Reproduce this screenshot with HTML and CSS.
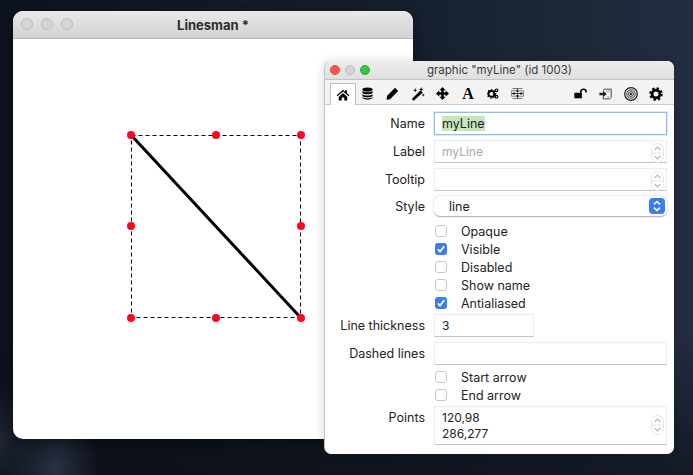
FILE: index.html
```html
<!DOCTYPE html>
<html lang="en">
<head>
<meta charset="utf-8">
<title>Linesman</title>
<link rel="stylesheet" href="styles.css">
</head>
<body>
<svg width="0" height="0" class="defs">
  <symbol id="stepper" viewBox="0 0 13 20">
    <rect x="0.5" y="0.5" width="12" height="19" rx="6" fill="#fff" stroke="#e6e6e6"/>
    <path d="M0.5 10H12.5" stroke="#e6e6e6"/>
    <path d="M3.5 7L6.5 4L9.5 7" fill="none" stroke="#bbb" stroke-width="1.2"/>
    <path d="M3.5 13L6.5 16L9.5 13" fill="none" stroke="#bbb" stroke-width="1.2"/>
  </symbol>
  <symbol id="check" viewBox="0 0 12 12">
    <path d="M2.8 6.3L5 8.6L9.3 3.2" fill="none" stroke="#fff" stroke-width="1.8"/>
  </symbol>
</svg>

<section class="window main-window">
  <header class="main-title">
    <span class="lights">
      <i class="light light-off"></i><i class="light light-off"></i><i class="light light-off"></i>
    </span>
    <span class="main-title-text">Linesman *</span>
  </header>
  <svg class="canvas" width="400" height="400" viewBox="13 39 400 400">
    <rect x="131.5" y="135.5" width="169" height="182" fill="none" stroke="#000" stroke-dasharray="4 3"/>
    <path d="M131 135L301 318" stroke="#000" stroke-width="3"/>
    <g fill="#ff0520">
      <circle cx="131" cy="135" r="4"/><circle cx="216" cy="135" r="4"/><circle cx="301" cy="135" r="4"/>
      <circle cx="131" cy="226" r="4"/><circle cx="301" cy="226" r="4"/>
      <circle cx="131" cy="318" r="4"/><circle cx="216" cy="318" r="4"/><circle cx="301" cy="318" r="4"/>
    </g>
  </svg>
</section>

<section class="window palette">
  <header class="pal-title">
    <span class="lights lights-small">
      <i class="light light-red"></i><i class="light light-off"></i><i class="light light-green"></i>
    </span>
    <span class="pal-title-text">graphic "myLine" (id 1003)</span>
  </header>

  <nav class="tabs">
    <span class="tab tab-active"><svg width="14" height="12" viewBox="0 0 16 14"><path d="M8 1L0.6 7.4L1.5 8.4L8 2.9L14.5 8.4L15.4 7.4L12.5 4.9V1.5H10.5V3.2Z"/><path d="M3 9.2L8 4.8L13 9.2V13.5H9.5V10H6.5V13.5H3Z"/></svg></span>
    <span class="tab"><svg width="11" height="13" viewBox="0 0 13 15"><ellipse cx="6.5" cy="2.8" rx="6" ry="2.5"/><path d="M0.5 4.6C2 6.6 11 6.6 12.5 4.6V7C11 9 2 9 0.5 7Z"/><path d="M0.5 8.4C2 10.4 11 10.4 12.5 8.4V10.4C11 12.4 2 12.4 0.5 10.4Z"/><path d="M0.5 11.6C2 13.6 11 13.6 12.5 11.6V12.4C11 15.2 2 15.2 0.5 12.4Z"/></svg></span>
    <span class="tab"><svg width="13" height="13" viewBox="0 0 13 13"><path d="M9 0.8L12.2 4L4 12.2L0.5 12.7L1 9Z"/></svg></span>
    <span class="tab"><svg width="14" height="14" viewBox="0 0 15 15"><path d="M10.3 3.6L12.6 5.8L3 14.8L0.8 12.8Z"/><path d="M11 0L11.6 1.9L13.5 2.5L11.6 3.1L11 5L10.4 3.1L8.5 2.5L10.4 1.9ZM4.5 1L5.1 2.9L7 3.5L5.1 4.1L4.5 6L3.9 4.1L2 3.5L3.9 2.9ZM13 7L13.5 8L14.8 8.5L13.5 9L13 10.5L12.5 9L11.2 8.5L12.5 8Z"/></svg></span>
    <span class="tab"><svg width="13" height="13" viewBox="0 0 15 15"><path d="M7.5 0L11 3.8H9V6H11.2V4L15 7.5L11.2 11V9H9V11.2H11L7.5 15L4 11.2H6V9H3.8V11L0 7.5L3.8 4V6H6V3.8H4Z"/></svg></span>
    <span class="tab tab-letter">A</span>
    <span class="tab"><svg width="12" height="11" viewBox="0 0 15 14"><circle cx="5.5" cy="7.5" r="3.7" fill="none" stroke="#000" stroke-width="2.4"/><circle cx="5.5" cy="7.5" r="5.4" fill="none" stroke="#000" stroke-width="1.4" stroke-dasharray="2 2"/><circle cx="12" cy="3" r="1.7" fill="none" stroke="#000" stroke-width="1.5"/><circle cx="12" cy="11" r="1.7" fill="none" stroke="#000" stroke-width="1.5"/></svg></span>
    <span class="tab"><svg width="13" height="11" viewBox="0 0 17 14"><path d="M2 0.5H15M2 13.5H15M0.5 3.5H16.5M0.5 10.5H16.5M0.5 3.5V10.5M16.5 3.5V10.5" fill="none" stroke="#555"/><path d="M8.5 0.5V4M8.5 10V13.5M1.5 7H15.5" stroke="#222" stroke-width="1.2"/><path d="M1.5 7L4.5 5V9ZM15.5 7L12.5 5V9ZM8.5 6L6.5 3.5H10.5ZM8.5 8L6.5 10.5H10.5Z"/></svg></span>
    <span class="tab tab-push"><svg width="13" height="11" viewBox="0 0 19 14"><rect x="0.5" y="6" width="11" height="8" rx="0.8"/><path d="M10 6V4C10 -0.2 17.5 -0.2 17.5 4V5.5" fill="none" stroke="#000" stroke-width="2.4"/></svg></span>
    <span class="tab"><svg width="13" height="12" viewBox="0 0 16 14"><path d="M5 3.5L7 1H15V11L13 13H5V10.5" fill="none" stroke="#444" stroke-width="1.2"/><path d="M0.5 5.5H5V3L9.5 7L5 11V8.5H0.5Z" fill="#222"/><path d="M9 3.5H13M10 10.5H12.5" stroke="#777"/></svg></span>
    <span class="tab"><svg width="14" height="14" viewBox="0 0 16 16" fill="none" stroke="#222"><circle cx="8" cy="8" r="7.2" stroke-width="1.4"/><circle cx="8" cy="8" r="4.8"/><circle cx="8" cy="8" r="2.8"/><circle cx="8" cy="8" r="1" fill="#000"/></svg></span>
    <span class="tab"><svg width="14" height="14" viewBox="0 0 15 15"><circle cx="7.5" cy="7.5" r="4.2" fill="none" stroke="#000" stroke-width="3"/><circle cx="7.5" cy="7.5" r="6" fill="none" stroke="#000" stroke-width="2.6" stroke-dasharray="2.4 2.3"/></svg></span>
  </nav>

  <div class="form">
    <label class="lbl lbl-h23">Name</label>
    <div class="field field-focus"><span class="selected">myLine</span></div>

    <label class="lbl lbl-h23">Label</label>
    <div class="field field-muted">myLine<svg class="stepper"><use href="#stepper"/></svg></div>

    <label class="lbl lbl-h23">Tooltip</label>
    <div class="field"><svg class="stepper"><use href="#stepper"/></svg></div>

    <label class="lbl">Style</label>
    <div class="select">line
      <span class="select-btn"><svg width="16" height="16" viewBox="0 0 16 16" fill="none" stroke="#fff" stroke-width="1.6"><path d="M5 6.4L8 3.5L11 6.4M5 9.6L8 12.5L11 9.6"/></svg></span>
    </div>

    <div class="checks">
      <div class="check-row"><span class="box"></span>Opaque</div>
      <div class="check-row"><span class="box box-on"><svg width="12" height="12"><use href="#check"/></svg></span>Visible</div>
      <div class="check-row"><span class="box"></span>Disabled</div>
      <div class="check-row"><span class="box"></span>Show name</div>
      <div class="check-row"><span class="box box-on"><svg width="12" height="12"><use href="#check"/></svg></span>Antialiased</div>
    </div>

    <label class="lbl lbl-h23">Line thickness</label>
    <div class="field field-short">3</div>

    <label class="lbl lbl-h23">Dashed lines</label>
    <div class="field"></div>

    <div class="checks checks-tight">
      <div class="check-row"><span class="box"></span>Start arrow</div>
      <div class="check-row"><span class="box"></span>End arrow</div>
    </div>

    <label class="lbl lbl-top">Points</label>
    <div class="field field-points">120,98<br>286,277<svg class="stepper"><use href="#stepper"/></svg></div>
  </div>
</section>
</body>
</html>
```

FILE: styles.css
```css
html, body {
  margin: 0;
  width: 693px;
  height: 475px;
  overflow: hidden;
}
body {
  position: relative;
  font-family: Inter, "Liberation Sans", sans-serif;
  font-size: 12.5px;
  color: #222;
  background:
    radial-gradient(ellipse 45px 70px at 55px 470px, rgba(44,54,72,.9) 0%, rgba(44,54,72,0) 100%),
    radial-gradient(ellipse 40px 60px at 0px 440px, rgba(34,44,60,.8) 0%, rgba(34,44,60,0) 100%),
    linear-gradient(rgba(8,10,15,0) 70%, rgba(8,10,15,.55) 100%),
    linear-gradient(90deg, #0e1320 0%, #17202e 60%, #232d40 100%);
}
.defs { position: absolute; }
.window {
  position: absolute;
  display: flex;
  flex-direction: column;
  background: #fff;
  overflow: hidden;
}
.main-window {
  left: 13px;
  top: 11px;
  width: 400px;
  height: 428px;
  border-radius: 10px;
  box-shadow: 0 4px 16px rgba(0,0,0,.45);
}
.main-title {
  position: relative;
  flex: none;
  height: 27px;
  border-bottom: 1px solid #b6b6b6;
  background: linear-gradient(#e9e9e9, #d2d2d2);
  display: flex;
  align-items: center;
  justify-content: center;
}
.main-title-text {
  font-weight: 700;
  font-size: 13px;
  color: #2b2b2b;
}
.lights {
  position: absolute;
  left: 8px;
  top: 7px;
  display: flex;
  gap: 8px;
}
.light {
  display: block;
  width: 12px;
  height: 12px;
  border-radius: 50%;
  box-sizing: border-box;
}
.light-off { background: #d5d5d5; border: 1px solid #bcbcbc; }
.light-red { background: #fc5753; border: 1px solid #df4744; }
.light-green { background: #33c748; border: 1px solid #27aa35; }
.lights-small { left: 5px; top: 4px; gap: 5px; }
.lights-small .light { width: 10px; height: 10px; }
.canvas { display: block; }

.palette {
  left: 325px;
  top: 61px;
  width: 349px;
  height: 393px;
  border-radius: 7px;
  box-shadow: -1px 0 0 #c6c6c6, -2px 0 10px rgba(0,0,0,.14);
}
.pal-title {
  position: relative;
  flex: none;
  height: 18px;
  border-bottom: 1px solid #c4c4c4;
  background: linear-gradient(#ededed, #dfdfdf);
  text-align: center;
  font-size: 11.5px;
  line-height: 18px;
  color: #3a3a3a;
}
.tabs {
  flex: none;
  box-sizing: border-box;
  height: 25px;
  padding: 3px 6px 0 5px;
  display: flex;
  background: #f3f3f3;
  border-bottom: 1px solid #cbcbcb;
}
.tab {
  flex: none;
  width: 25px;
  height: 21px;
  box-sizing: border-box;
  display: flex;
  align-items: center;
  justify-content: center;
}
.tab svg { display: block; }
.tab-active {
  width: 26px;
  margin-right: -1px;
  height: 22px;
  background: #fff;
  border: 1px solid #bdbdbd;
  border-bottom: 0;
}
.tab-letter {
  font-family: "Liberation Serif", serif;
  font-weight: 700;
  font-size: 16px;
  color: #000;
  padding-left: 1px;
}
.tab-push { margin-left: auto; }

.form {
  flex: 1;
  padding: 7px 7px 0 0;
  display: grid;
  grid-template-columns: 100px 1fr;
  column-gap: 9px;
  row-gap: 5px;
  align-content: start;
}
.lbl {
  text-align: right;
  align-self: center;
  color: #222;
}
.lbl-top { align-self: start; padding-top: 4px; }
.field {
  position: relative;
  box-sizing: border-box;
  height: 23px;
  padding: 0 7px;
  line-height: 21px;
  font-size: 12px;
  background: #fff;
  border: 1px solid #ececec;
  border-bottom-color: #c4c4c4;
  color: #222;
}
.field-focus {
  height: 23px;
  border: 1px solid #8fbcf2;
  box-shadow: 0 0 0 0.5px #b9d5f6;
  font-size: 12.5px;
}
.selected { background: #c6e6ba; display: inline-block; line-height: 15px; }
.field-muted { color: #a9a9a9; }
.field-short { width: 100px; }
.field-points { height: 39px; line-height: 16px; padding-top: 3px; }
.stepper {
  position: absolute;
  right: 2px;
  top: 2px;
  width: 13px;
  height: 20px;
}
.field-points .stepper { top: 8px; }
.select {
  position: relative;
  box-sizing: border-box;
  height: 20px;
  padding-left: 15px;
  line-height: 21px;
  font-size: 12.5px;
  border-radius: 6px;
  background: #fff;
  box-shadow: 0 0.5px 1.5px rgba(0,0,0,.35);
}
.select-btn {
  position: absolute;
  right: 2px;
  top: 2px;
  width: 16px;
  height: 16px;
  border-radius: 4px;
  background: #3b7cf5;
}
.select-btn svg { display: block; }
.checks {
  grid-column: 2;
  display: flex;
  flex-direction: column;
  margin: 1px 0 -3px;
}
.checks-tight { margin: -2px 0 -3px; }
.check-row {
  height: 18px;
  display: flex;
  align-items: center;
  color: #222;
}
.box {
  flex: none;
  width: 12px;
  height: 12px;
  margin: 0 14px 0 1px;
  box-sizing: border-box;
  border: 1px solid #c8c8c8;
  border-radius: 3px;
  background: #fff;
}
.box-on {
  border: 0;
  background: #3b7cf5;
}
.box svg { display: block; }
```
